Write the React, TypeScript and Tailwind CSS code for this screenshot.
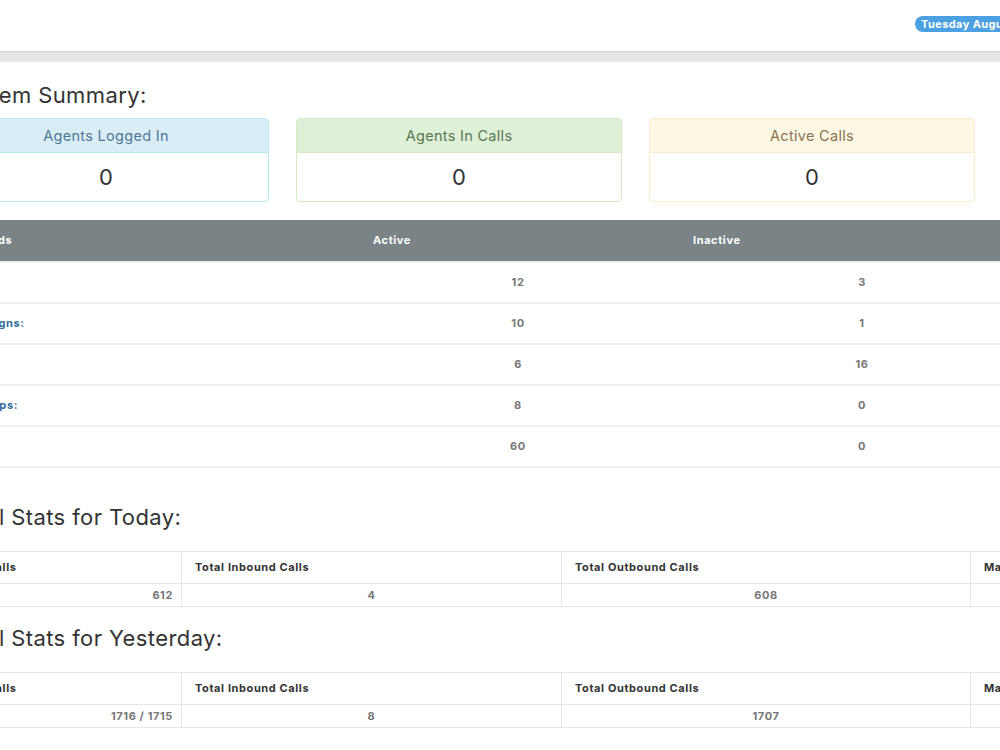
import React from 'react';

const font = { fontFamily: 'Inter, "DejaVu Sans", sans-serif' };

const summaryCards = [
  { title: 'Agents Logged In', value: '0', head: 'bg-[#d9edf7] text-[#4d7896]', border: 'border-[#bce8f1]' },
  { title: 'Agents In Calls', value: '0', head: 'bg-[#dff0d8] text-[#58794f]', border: 'border-[#d6e9c6]' },
  { title: 'Active Calls', value: '0', head: 'bg-[#fcf8e3] text-[#8a7350]', border: 'border-[#faebcc]' },
];

const records = [
  { label: 'Users:', active: '12', inactive: '3' },
  { label: 'Campaigns:', active: '10', inactive: '1' },
  { label: 'Lists:', active: '6', inactive: '16' },
  { label: 'In-Groups:', active: '8', inactive: '0' },
  { label: 'DIDs:', active: '60', inactive: '0' },
];

const StatsTable: React.FC<{ total: string; inbound: string; outbound: string }> = ({ total, inbound, outbound }) => (
  <div className="border-t border-b border-[#e6e6e6] text-[11px] font-bold tracking-[0.6px]">
    <div className="grid grid-cols-[238px_380px_409px_200px] h-[32px] border-b border-[#e6e6e6] text-[#333]">
      <div className="flex items-center pl-[11px]">Total Calls</div>
      <div className="flex items-center pl-[13px] border-l border-[#e6e6e6]">Total Inbound Calls</div>
      <div className="flex items-center pl-[13px] border-l border-[#e6e6e6]">Total Outbound Calls</div>
      <div className="flex items-center pl-[13px] border-l border-[#e6e6e6]">Max Agents</div>
    </div>
    <div className="grid grid-cols-[238px_380px_409px_200px] h-[22px] text-[#777]">
      <div className="flex items-center justify-end pr-[8px]">{total}</div>
      <div className="flex items-center justify-center border-l border-[#e6e6e6]">{inbound}</div>
      <div className="flex items-center justify-center border-l border-[#e6e6e6]">{outbound}</div>
      <div className="flex items-center justify-center border-l border-[#e6e6e6]">0</div>
    </div>
  </div>
);

const App: React.FC = () => {
  return (
    <div className="w-[1000px] h-[750px] overflow-hidden bg-white" style={font}>
      <div className="-ml-[57px] w-[1190px]">
        {/* top header */}
        <div className="h-[51px] flex items-start justify-end">
          <div className="mt-[16px] mr-[18px] w-[200px] h-[16px] rounded-full bg-[#4aa0e0] text-white text-[11px] font-bold tracking-[0.4px] leading-[16px] pl-[6px] whitespace-nowrap">
            Tuesday August 13, 2024
          </div>
        </div>
        <div className="h-[11px] border-t border-[#d6d6d6] bg-[#e6e6e6]" />

        <div className="mt-[18px]">
          <h2 className="pl-[9px] text-[22px] leading-[30px] tracking-[0.4px] text-[#333]">System Summary:</h2>

          <div className="mt-[8px] flex gap-[27px]">
            {summaryCards.map((c) => (
              <div key={c.title} className={`w-[326px] h-[84px] border rounded-[4px] overflow-hidden ${c.border}`}>
                <div className={`h-[34px] flex items-center justify-center text-[14.5px] tracking-[0.3px] border-b ${c.head} ${c.border}`}>
                  {c.title}
                </div>
                <div className="h-[48px] flex items-center justify-center text-[22px] text-[#333]">{c.value}</div>
              </div>
            ))}
          </div>

          {/* records table */}
          <div className="mt-[18px] text-[11px] font-bold tracking-[0.6px]">
            <div className="h-[41px] bg-[#7a8487] text-white flex items-center">
              <div className="w-[430px] pl-[21px]">Records</div>
              <div className="w-[320px]">Active</div>
              <div>Inactive</div>
            </div>
            {records.map((r) => (
              <div key={r.label} className="grid grid-cols-[403px_344px_344px] h-[41px] border-t-2 border-[#f0f0f0] items-center">
                <div className="pl-[11px] text-[#2f6a9c]">{r.label}</div>
                <div className="text-center text-[#777]">{r.active}</div>
                <div className="text-center text-[#777]">{r.inactive}</div>
              </div>
            ))}
            <div className="border-t-2 border-[#f0f0f0]" />
          </div>

          <h2 className="mt-[34px] pl-[9px] text-[22px] leading-[30px] tracking-[0.4px] text-[#333]">Total Stats for Today:</h2>
          <div className="mt-[19px]">
            <StatsTable total="612" inbound="4" outbound="608" />
          </div>

          <h2 className="mt-[16px] pl-[9px] text-[22px] leading-[30px] tracking-[0.4px] text-[#333]">Total Stats for Yesterday:</h2>
          <div className="mt-[19px]">
            <StatsTable total="1716 / 1715" inbound="8" outbound="1707" />
          </div>
        </div>
      </div>
    </div>
  );
};

export default App;
